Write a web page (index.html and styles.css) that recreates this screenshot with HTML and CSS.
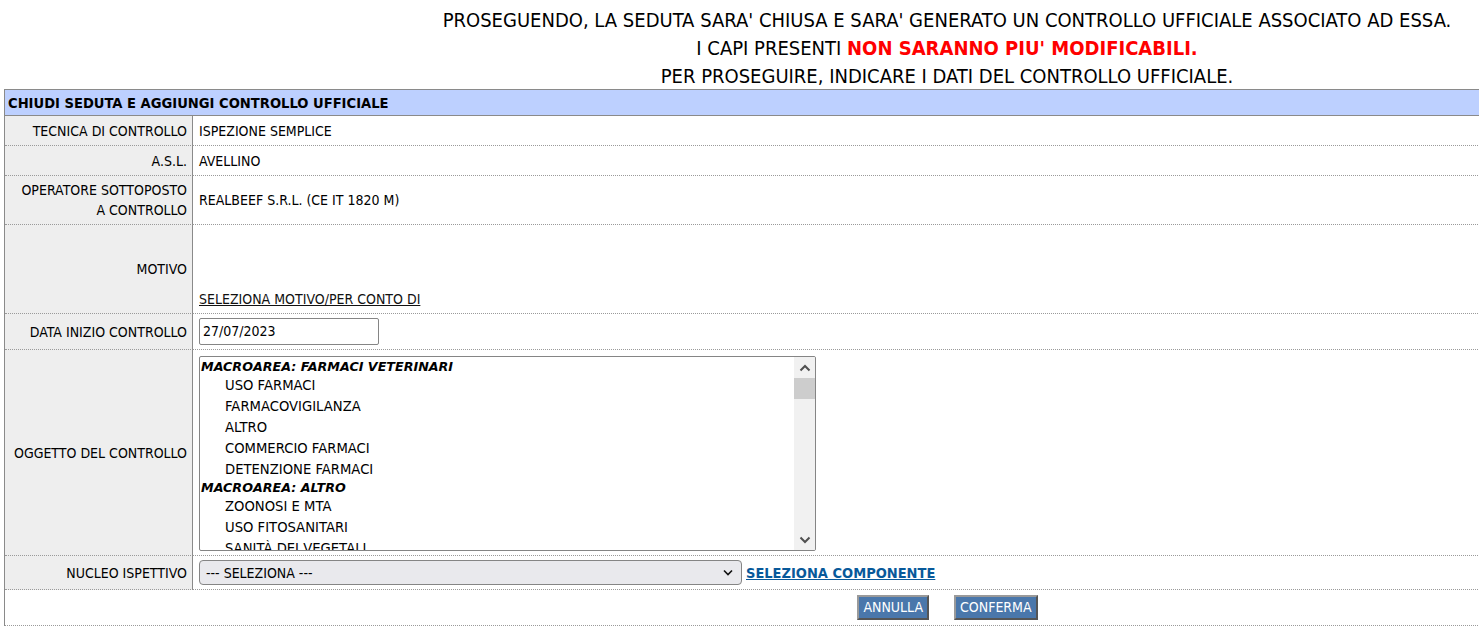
FILE: index.html
```html
<!DOCTYPE html>
<html lang="it">
<head>
<meta charset="utf-8">
<title>Chiudi seduta</title>
<link rel="stylesheet" href="styles.css">
</head>
<body>
<div class="page">
  <div class="notice">
    <div>PROSEGUENDO, LA SEDUTA SARA' CHIUSA E SARA' GENERATO UN CONTROLLO UFFICIALE ASSOCIATO AD ESSA.</div>
    <div>I CAPI PRESENTI <b class="red">NON SARANNO PIU' MODIFICABILI.</b></div>
    <div>PER PROSEGUIRE, INDICARE I DATI DEL CONTROLLO UFFICIALE.</div>
  </div>

  <div class="form">
    <div class="title">CHIUDI SEDUTA E AGGIUNGI CONTROLLO UFFICIALE</div>

    <div class="label r-std">TECNICA DI CONTROLLO</div>
    <div class="value r-std">ISPEZIONE SEMPLICE</div>

    <div class="label r-std">A.S.L.</div>
    <div class="value r-std">AVELLINO</div>

    <div class="label">OPERATORE SOTTOPOSTO<br>A CONTROLLO</div>
    <div class="value">REALBEEF S.R.L. (CE IT 1820 M)</div>

    <div class="label">MOTIVO</div>
    <div class="value motivo">
      <div class="motivo-list"></div>
      <a class="plain-link" href="#">SELEZIONA MOTIVO/PER CONTO DI</a>
    </div>

    <div class="label">DATA INIZIO CONTROLLO</div>
    <div class="value"><div class="input">27/07/2023</div></div>

    <div class="label">OGGETTO DEL CONTROLLO</div>
    <div class="value oggetto">
      <div class="listbox">
        <div class="list-items">
          <div class="group">MACROAREA: FARMACI VETERINARI</div>
          <div class="opt">USO FARMACI</div>
          <div class="opt">FARMACOVIGILANZA</div>
          <div class="opt">ALTRO</div>
          <div class="opt">COMMERCIO FARMACI</div>
          <div class="opt">DETENZIONE FARMACI</div>
          <div class="group">MACROAREA: ALTRO</div>
          <div class="opt">ZOONOSI E MTA</div>
          <div class="opt">USO FITOSANITARI</div>
          <div class="opt">SANITÀ DEI VEGETALI</div>
        </div>
        <div class="scrollbar">
          <div class="sb-btn"><svg width="12" height="8" viewBox="0 0 12 8"><path d="M1.5 6.5 L6 2 L10.5 6.5" fill="none" stroke="#505050" stroke-width="2"/></svg></div>
          <div class="sb-thumb"></div>
          <div class="sb-track"></div>
          <div class="sb-btn"><svg width="12" height="8" viewBox="0 0 12 8"><path d="M1.5 1.5 L6 6 L10.5 1.5" fill="none" stroke="#505050" stroke-width="2"/></svg></div>
        </div>
      </div>
    </div>

    <div class="label">NUCLEO ISPETTIVO</div>
    <div class="value nucleo">
      <div class="select"><span class="select-text">--- SELEZIONA ---</span><svg class="chev" width="10" height="7" viewBox="0 0 10 7"><path d="M1 1.5 L5 5.5 L9 1.5" fill="none" stroke="#111" stroke-width="1.6"/></svg></div>
      <a class="blue-link" href="#">SELEZIONA COMPONENTE</a>
    </div>

    <div class="actions">
      <button class="btn" type="button">ANNULLA</button>
      <button class="btn" type="button">CONFERMA</button>
    </div>
  </div>
</div>
</body>
</html>
```

FILE: styles.css
```css
html, body {
  margin: 0;
  padding: 0;
  background: #fff;
  overflow: hidden;
}
body {
  font-family: "DejaVu Sans Condensed", "DejaVu Sans", sans-serif;
  color: #000;
}
.page {
  width: 1894px;
}
.notice {
  padding-top: 6px;
  text-align: center;
  font-size: 20px;
  line-height: 28px;
}
.notice .red {
  color: #ff0000;
}
.form {
  margin: -1px 4px 0;
  border-left: 1px solid #8a8a8a;
  border-top: 1px solid #8a8a8a;
  display: grid;
  grid-template-columns: 188px 1fr;
  font-size: 14px;
  line-height: 20px;
}
.title {
  grid-column: 1 / 3;
  background: #bdd0ff;
  border-bottom: 1px solid #8a8a8a;
  font-weight: bold;
  font-size: 14.6px;
  height: 25px;
  line-height: 25px;
  padding-left: 3px;
}
.label {
  background: #eeeeee;
  border-right: 1px solid #8a8a8a;
  border-bottom: 1px dotted #9a9a9a;
  display: flex;
  align-items: center;
  justify-content: flex-end;
  text-align: right;
  padding: 4px 5px 4px 5px;
}
.value {
  border-bottom: 1px dotted #9a9a9a;
  display: flex;
  align-items: center;
  padding: 4px 6px;
}
.r-std {
  min-height: 21px;
}
.motivo {
  flex-direction: column;
  align-items: flex-start;
}
.motivo-list {
  height: 60px;
}
.plain-link {
  color: #111;
  text-decoration: underline;
}
.input {
  box-sizing: border-box;
  width: 180px;
  height: 27px;
  border: 1px solid #858585;
  border-radius: 2px;
  padding-left: 3px;
  line-height: 25px;
  font-size: 14px;
}
.oggetto {
  padding-top: 6px;
  padding-bottom: 4px;
}
.listbox {
  box-sizing: border-box;
  width: 617px;
  height: 195px;
  border: 1px solid #858585;
  border-radius: 2px;
  display: flex;
  overflow: hidden;
}
.list-items {
  flex: 1;
  padding-top: 2px;
  font-family: "DejaVu Sans", sans-serif;
  font-size: 13.2px;
  overflow: hidden;
}
.group {
  font-weight: bold;
  font-style: italic;
  font-size: 12.7px;
  height: 16px;
  line-height: 16px;
  padding-left: 1px;
}
.opt {
  height: 21px;
  line-height: 21px;
  padding-left: 25px;
  white-space: nowrap;
}
.scrollbar {
  width: 21px;
  background: #f1f1f1;
  display: flex;
  flex-direction: column;
}
.sb-btn {
  height: 21px;
  display: flex;
  align-items: center;
  justify-content: center;
}
.sb-thumb {
  height: 21px;
  background: #cdcdcd;
}
.sb-track {
  flex: 1;
}
.nucleo {
  gap: 4px;
}
.select {
  box-sizing: border-box;
  width: 543px;
  height: 25px;
  background: #e9e9ed;
  border: 1px solid #858585;
  border-radius: 4px;
  display: flex;
  align-items: center;
  padding: 0 8px 0 6px;
}
.select-text {
  flex: 1;
  white-space: nowrap;
}
.chev {
  flex: none;
}
.blue-link {
  color: #08599a;
  font-weight: bold;
  font-size: 14.5px;
  text-decoration: underline;
  white-space: nowrap;
}
.actions {
  grid-column: 1 / 3;
  border-bottom: 1px dotted #9a9a9a;
  display: flex;
  justify-content: center;
  gap: 25px;
  padding: 5px 0 5px;
  height: 25px;
}
.btn {
  font-family: "DejaVu Sans Condensed", "DejaVu Sans", sans-serif;
  font-size: 14px;
  color: #fff;
  background: #4a77ab;
  border: 2px solid;
  border-color: #9a9a9a #555555 #555555 #9a9a9a;
  padding: 0 4px;
  height: 25px;
  line-height: 19px;
}
```
